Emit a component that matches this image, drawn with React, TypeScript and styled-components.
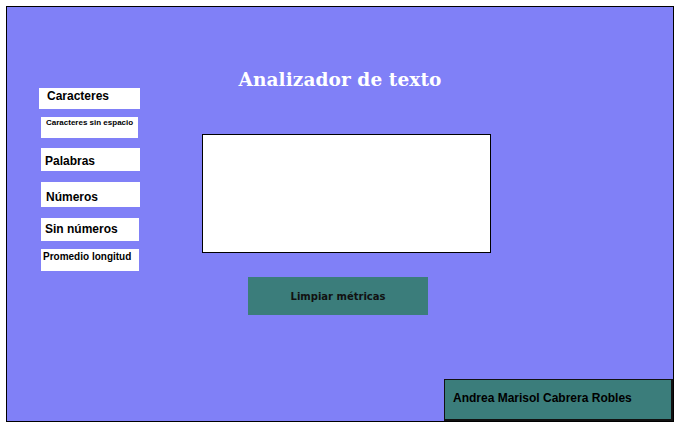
import React from "react";
import styled, { createGlobalStyle } from "styled-components";

const Global = createGlobalStyle`
  html, body { margin: 0; padding: 0; background: #ffffff; }
  body { padding: 6px; }
  * { box-sizing: border-box; }
`;

const Frame = styled.main`
  width: 668px;
  height: 416px;
  border: 1px solid #000;
  background: #8080f7;
  display: flex;
  flex-direction: column;
`;

const Title = styled.h1`
  margin: 0;
  height: 81px;
  padding-top: 62px;
  text-align: center;
  font-family: "DejaVu Serif", "Liberation Serif", serif;
  font-weight: bold;
  font-size: 18.5px;
  line-height: 22px;
  letter-spacing: 0.1px;
  color: #ffffff;
`;

const Content = styled.div`
  display: flex;
  align-items: flex-start;
`;

const Sidebar = styled.aside`
  display: flex;
  flex-direction: column;
  align-items: flex-start;
  padding-left: 32px;
  width: 134px;
`;

const Metric = styled.div<{
  $w: number;
  $h: number;
  $mt: number;
  $ml: number;
  $pt: number;
  $pl: number;
  $fs: number;
}>`
  width: ${(p) => p.$w}px;
  height: ${(p) => p.$h}px;
  margin-top: ${(p) => p.$mt}px;
  margin-left: ${(p) => p.$ml}px;
  padding: ${(p) => p.$pt}px 0 0 ${(p) => p.$pl}px;
  background: #ffffff;
  font-family: "Liberation Sans", Arial, sans-serif;
  font-weight: bold;
  font-size: ${(p) => p.$fs}px;
  line-height: ${(p) => Math.round(p.$fs * 1.15)}px;
  color: #000;
  white-space: nowrap;
`;

const Workspace = styled.section`
  display: flex;
  flex-direction: column;
  align-items: flex-start;
`;

const TextInput = styled.textarea`
  display: block;
  width: 289px;
  height: 119px;
  margin: 46px 0 0 61px;
  border: 1px solid #000;
  background: #ffffff;
  resize: none;
  outline: none;
  padding: 4px;
  font-family: "Liberation Sans", Arial, sans-serif;
  font-size: 13px;
`;

const ClearButton = styled.button`
  width: 180px;
  height: 38px;
  margin: 24px 0 0 107px;
  border: none;
  background: #3b7d7b;
  color: #111;
  font-family: "DejaVu Sans", Verdana, sans-serif;
  font-weight: bold;
  font-size: 10px;
  cursor: pointer;
  padding: 0;
`;

const Footer = styled.footer`
  margin-top: auto;
  align-self: flex-end;
  width: 229px;
  height: 42px;
  border: 1px solid #111;
  border-right-width: 2px;
  border-bottom-width: 2px;
  background: #3b7d7b;
  padding: 11px 0 0 8px;
  font-family: "Liberation Sans", Arial, sans-serif;
  font-weight: bold;
  font-size: 12px;
  line-height: 14px;
  color: #000;
`;

const metrics = [
  { label: "Caracteres", w: 101, h: 21, mt: 0, ml: 0, pt: 1, pl: 8, fs: 12 },
  { label: "Caracteres sin espacio", w: 97, h: 21, mt: 8, ml: 2, pt: 1, pl: 5, fs: 8 },
  { label: "Palabras", w: 99, h: 23, mt: 10, ml: 2, pt: 6, pl: 4, fs: 12 },
  { label: "Números", w: 99, h: 25, mt: 11, ml: 2, pt: 8, pl: 5, fs: 12 },
  { label: "Sin números", w: 98, h: 23, mt: 11, ml: 2, pt: 4, pl: 4, fs: 12 },
  { label: "Promedio longitud", w: 98, h: 22, mt: 8, ml: 2, pt: 2, pl: 2, fs: 10 },
];

export default function App() {
  return (
    <>
      <Global />
      <Frame>
        <Title>Analizador de texto</Title>
        <Content>
          <Sidebar>
            {metrics.map((m) => (
              <Metric
                key={m.label}
                $w={m.w}
                $h={m.h}
                $mt={m.mt}
                $ml={m.ml}
                $pt={m.pt}
                $pl={m.pl}
                $fs={m.fs}
              >
                {m.label}
              </Metric>
            ))}
          </Sidebar>
          <Workspace>
            <TextInput aria-label="Texto" />
            <ClearButton type="button">Limpiar métricas</ClearButton>
          </Workspace>
        </Content>
        <Footer>Andrea Marisol Cabrera Robles</Footer>
      </Frame>
    </>
  );
}
